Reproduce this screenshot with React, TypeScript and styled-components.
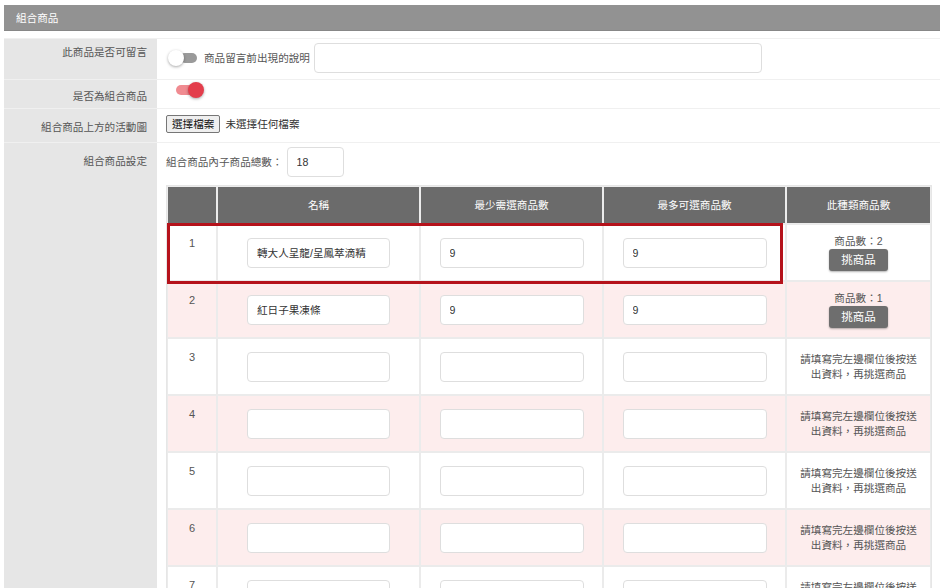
import React from "react";
import styled, { createGlobalStyle } from "styled-components";

const Global = createGlobalStyle`
  html, body { margin: 0; padding: 0; overflow: hidden; background: #fff; }
  body {
    font-family: "Liberation Sans", "Noto Sans CJK TC", sans-serif;
    font-size: 10.6px;
    color: #555;
  }
  * { box-sizing: border-box; }
`;

const Page = styled.div`
  padding: 5px 0 0 4px;
  width: 940px;
  height: 588px;
`;

const TitleBar = styled.div`
  height: 26px;
  background: #929292;
  border-bottom: 1px solid #878787;
  color: #fff;
  padding-left: 12px;
  display: flex;
  align-items: center;
  font-size: 10.6px;
`;

const Form = styled.div`
  margin-top: 7px;
`;

const FormRow = styled.div`
  display: grid;
  grid-template-columns: 153px 1fr;
  border-top: 1px solid #f0f0f0;
`;

const Label = styled.div<{ $top: number }>`
  background: #e6e6e6;
  text-align: right;
  padding: ${(p) => p.$top}px 10px 0 0;
  line-height: 14px;
  color: #555;
`;

const Content = styled.div<{ $pad: string }>`
  display: flex;
  align-items: center;
  padding: ${(p) => p.$pad};
  line-height: 14px;
`;

const StackContent = styled.div`
  padding: 4px 0 0 9px;
  line-height: 14px;
`;

const Toggle = styled.span<{ $on?: boolean }>`
  position: relative;
  display: inline-block;
  width: 32px;
  height: 16px;
  margin-left: 2px;
  flex: none;
  &::before {
    content: "";
    position: absolute;
    top: 3px;
    left: ${(p) => (p.$on ? 4 : 12)}px;
    width: ${(p) => (p.$on ? 22 : 17)}px;
    height: 10px;
    border-radius: 5px;
    background: ${(p) => (p.$on ? "#f08b91" : "#9a9a9a")};
  }
  &::after {
    content: "";
    position: absolute;
    top: 0;
    left: ${(p) => (p.$on ? 16 : 0)}px;
    width: 16px;
    height: 16px;
    border-radius: 50%;
    background: ${(p) => (p.$on ? "#e33d4b" : "#fff")};
    box-shadow: 0 1px 3px rgba(0, 0, 0, 0.35);
  }
`;

const InlineText = styled.span<{ $ml?: number; $color?: string }>`
  margin-left: ${(p) => p.$ml ?? 0}px;
  color: ${(p) => p.$color ?? "#555"};
  white-space: nowrap;
`;

const TextInput = styled.input<{ $w: number; $ml?: number }>`
  width: ${(p) => p.$w}px;
  height: 30px;
  margin-left: ${(p) => p.$ml ?? 0}px;
  border: 1px solid #dedede;
  border-radius: 4px;
  background: #fff;
  padding: 0 9px;
  font-family: inherit;
  font-size: 10.6px;
  color: #333;
  outline: none;
`;

const FileButton = styled.span`
  display: inline-flex;
  align-items: center;
  height: 18px;
  padding: 0 5px;
  background: #efefef;
  border: 1px solid #767676;
  border-radius: 2px;
  color: #111;
`;

const CountLine = styled.div`
  display: flex;
  align-items: center;
`;

const TableWrap = styled.div`
  position: relative;
  margin-top: 8px;
  width: 766px;
  border: 1px solid #e6e6e6;
`;

const Table = styled.table`
  width: 764px;
  border-collapse: separate;
  border-spacing: 0;
  table-layout: fixed;
`;

const Th = styled.th`
  height: 38px;
  background: #6b6b6b;
  color: #fff;
  font-weight: normal;
  border: 1px solid #ececec;
  font-size: 10.6px;
  padding: 0;
`;

const Tr = styled.tr<{ $alt: boolean }>`
  background: ${(p) => (p.$alt ? "#fdeded" : "#fff")};
`;

const Td = styled.td`
  height: 57px;
  border: 1px solid #ebebeb;
  text-align: center;
  vertical-align: middle;
  padding: 0;
`;

const NumTd = styled(Td)`
  vertical-align: top;
  padding-top: 11px;
  color: #555;
  font-size: 11px;
  line-height: 14px;
`;

const InfoTd = styled(Td)`
  padding: 0 10px;
  line-height: 15px;
  color: #555;
`;

const PickButton = styled.span`
  display: block;
  margin: 0 auto;
  width: 59px;
  height: 22px;
  line-height: 22px;
  border-radius: 3px;
  background: #6e6e6e;
  color: #fff;
  font-size: 11.5px;
  box-shadow: 0 1px 2px rgba(0, 0, 0, 0.3);
`;

const Highlight = styled.div`
  position: absolute;
  left: 0;
  top: 37px;
  width: 616px;
  height: 61px;
  border: 3px solid #b5121b;
  pointer-events: none;
`;

type Item = { name: string; min: string; max: string; count?: number };

const items: Item[] = [
  { name: "轉大人呈龍/呈鳳萃滴精", min: "9", max: "9", count: 2 },
  { name: "紅日子果凍條", min: "9", max: "9", count: 1 },
  { name: "", min: "", max: "" },
  { name: "", min: "", max: "" },
  { name: "", min: "", max: "" },
  { name: "", min: "", max: "" },
  { name: "", min: "", max: "" },
  { name: "", min: "", max: "" },
];

const cols = [50, 203, 183, 183, 145];

export default function App() {
  return (
    <Page>
      <Global />
      <TitleBar>組合商品</TitleBar>
      <Form>
        <FormRow>
          <Label $top={6}>此商品是否可留言</Label>
          <Content $pad="4px 0 6px 9px">
            <Toggle />
            <InlineText $ml={4}>商品留言前出現的說明</InlineText>
            <TextInput $w={448} $ml={4} defaultValue="" />
          </Content>
        </FormRow>
        <FormRow>
          <Label $top={9}>是否為組合商品</Label>
          <Content $pad="2px 0 10px 13px">
            <Toggle $on />
          </Content>
        </FormRow>
        <FormRow>
          <Label $top={11}>組合商品上方的活動圖</Label>
          <Content $pad="6px 0 9px 9px">
            <FileButton>選擇檔案</FileButton>
            <InlineText $ml={5} $color="#333">未選擇任何檔案</InlineText>
          </Content>
        </FormRow>
        <FormRow>
          <Label $top={11}>組合商品設定</Label>
          <StackContent>
            <CountLine>
              <InlineText>組合商品內子商品總數：</InlineText>
              <TextInput $w={57} $ml={4} defaultValue="18" />
            </CountLine>
            <TableWrap>
              <Table>
                <colgroup>
                  {cols.map((w, i) => (
                    <col key={i} style={{ width: w }} />
                  ))}
                </colgroup>
                <thead>
                  <tr>
                    <Th></Th>
                    <Th>名稱</Th>
                    <Th>最少需選商品數</Th>
                    <Th>最多可選商品數</Th>
                    <Th>此種類商品數</Th>
                  </tr>
                </thead>
                <tbody>
                  {items.map((it, i) => (
                    <Tr key={i} $alt={i % 2 === 1}>
                      <NumTd>{i + 1}</NumTd>
                      <Td>
                        <TextInput $w={143} defaultValue={it.name} />
                      </Td>
                      <Td>
                        <TextInput $w={144} defaultValue={it.min} />
                      </Td>
                      <Td>
                        <TextInput $w={144} defaultValue={it.max} />
                      </Td>
                      <InfoTd>
                        {it.count !== undefined ? (
                          <>
                            <div>商品數：{it.count}</div>
                            <PickButton>挑商品</PickButton>
                          </>
                        ) : (
                          "請填寫完左邊欄位後按送出資料，再挑選商品"
                        )}
                      </InfoTd>
                    </Tr>
                  ))}
                </tbody>
              </Table>
              <Highlight />
            </TableWrap>
          </StackContent>
        </FormRow>
      </Form>
    </Page>
  );
}
